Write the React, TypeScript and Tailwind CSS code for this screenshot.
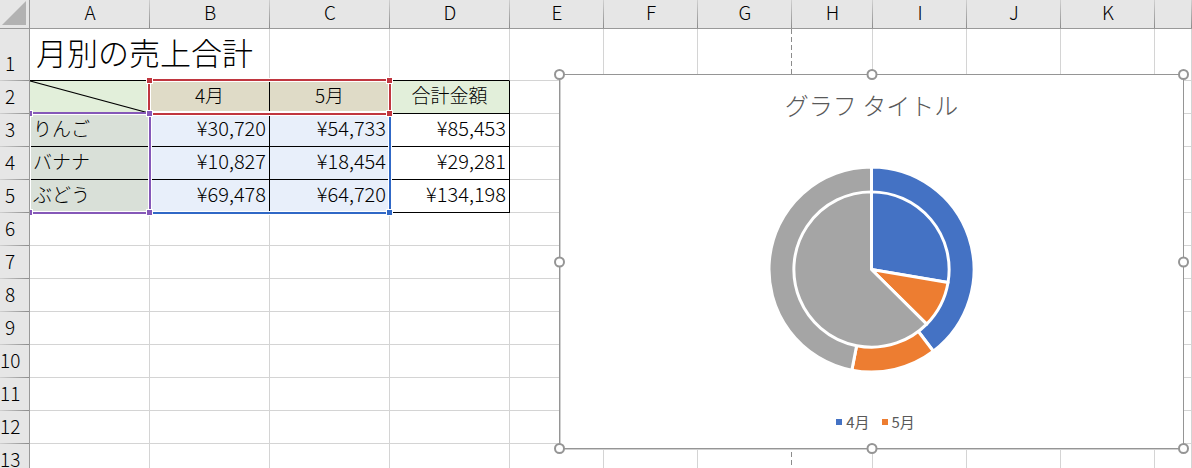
import clsx from "clsx"

type Slice = { color: string; value: number }

const COLUMNS = ["A", "B", "C", "D", "E", "F", "G", "H", "I", "J", "K", "L"]
const EMPTY_ROWS = [6, 7, 8, 9, 10, 11, 12, 13]

const SALES = [
    { row: 3, name: "りんご", april: 30720, may: 54733, color: "#4472c4" },
    { row: 4, name: "バナナ", april: 10827, may: 18454, color: "#ed7d31" },
    { row: 5, name: "ぶどう", april: 69478, may: 64720, color: "#a5a5a5" },
]

const yen = (value: number) => "¥" + value.toLocaleString("en-US")

// Columns E and up hold no data, only grid lines
function EmptyCells({ from = 4 }: { from?: number }) {
    return (
        <>
            {COLUMNS.slice(from).map((col) => (
                <td
                    key={col}
                    className={clsx(
                        "border-b border-[#d4d4d4]",
                        // page break runs along the right side of G
                        col === "G"
                            ? "bg-[repeating-linear-gradient(to_bottom,#8c8c8c_0px_5px,#ffffff_5px_8px)] bg-[length:1px_100%] bg-right bg-no-repeat"
                            : "border-r",
                    )}
                />
            ))}
        </>
    )
}

function RowHeader({ row }: { row: number }) {
    return (
        <th
            scope="row"
            className={clsx(
                "border-r border-[#999999] bg-[#e6e6e6] bg-[linear-gradient(to_right,#d0d0d0,#8c8c8c)] bg-[length:100%_1px] bg-bottom bg-no-repeat p-0 pr-[9px] text-center font-light leading-6",
                row === 1 ? "pb-1.5 align-bottom" : "pb-1 align-middle",
            )}
        >
            {row}
        </th>
    )
}

function Amount({ value, className }: { value: number; className?: string }) {
    return (
        <td className={clsx("border-r border-b border-black p-0 pr-[3px] pb-1 text-right text-xl leading-6", className)}>
            {yen(value)}
        </td>
    )
}

function Sheet() {
    return (
        <table className="w-full table-fixed border-separate border-spacing-0 text-[19px] leading-6 font-light text-black">
            <colgroup>
                <col className="w-[30px]" />
                <col className="w-[120px]" />
                <col className="w-[120px]" />
                <col className="w-[120px]" />
                <col className="w-[120px]" />
                <col className="w-[94px]" />
                <col className="w-[94px]" />
                <col className="w-[94px]" />
                <col className="w-[81px]" />
                <col className="w-[94px]" />
                <col className="w-[94px]" />
                <col className="w-[94px]" />
                <col />
            </colgroup>
            <thead>
                <tr className="h-[29px]">
                    <th className="border-r border-b border-[#999999] bg-[#e6e6e6] p-0">
                        <svg viewBox="0 0 29 28" className="block h-7 w-full" aria-hidden="true">
                            <path d="M26 1V25H2Z" fill="#b2b2b2" />
                        </svg>
                    </th>
                    {COLUMNS.map((col) => (
                        <th
                            key={col}
                            scope="col"
                            className="border-b border-[#999999] bg-[#e6e6e6] bg-[linear-gradient(to_bottom,#d0d0d0,#8c8c8c)] bg-[length:1px_100%] bg-right bg-no-repeat p-0 pb-1 font-light"
                        >
                            {col !== "L" && col}
                        </th>
                    ))}
                </tr>
            </thead>
            <tbody>
                <tr className="h-[52px]">
                    <RowHeader row={1} />
                    <td
                        colSpan={2}
                        className="border-r border-b border-r-[#d4d4d4] border-b-black p-0 pb-1.5 pl-1.5 text-[31px] leading-10 whitespace-nowrap"
                    >
                        月別の売上合計
                    </td>
                    <td className="border-r border-b border-r-[#d4d4d4] border-b-black" />
                    <td className="border-r border-b border-r-[#d4d4d4] border-b-black" />
                    <EmptyCells />
                </tr>
                <tr className="h-[33px]">
                    <RowHeader row={2} />
                    <td className="border-r border-b border-black bg-[#e2efda] p-0">
                        <svg
                            viewBox="0 0 119 32"
                            preserveAspectRatio="none"
                            className="block h-8 w-full"
                            aria-hidden="true"
                        >
                            <path d="M0 0L119 32" stroke="#000000" strokeWidth="1.2" />
                        </svg>
                    </td>
                    <td className="border-r border-b border-black bg-[#dfdbc7] p-0 pb-1 text-center">4月</td>
                    <td className="border-r border-b border-black bg-[#dfdbc7] p-0 pb-1 text-center">5月</td>
                    <td className="border-r border-b border-black bg-[#e2efda] p-0 pb-1 text-center">合計金額</td>
                    <EmptyCells />
                </tr>
                {SALES.map((item) => (
                    <tr key={item.row} className="h-[33px]">
                        <RowHeader row={item.row} />
                        <td className="border-r border-b border-black bg-[#d9e0d8] p-0 pb-1 pl-[3px]">
                            {item.name}
                        </td>
                        <Amount value={item.april} className="bg-[#e8effa]" />
                        <Amount value={item.may} className="bg-[#e8effa]" />
                        <Amount value={item.april + item.may} />
                        <EmptyCells />
                    </tr>
                ))}
                {EMPTY_ROWS.map((row) => (
                    <tr key={row} className="h-[33px]">
                        <RowHeader row={row} />
                        <EmptyCells from={0} />
                    </tr>
                ))}
            </tbody>
        </table>
    )
}

// Coloured frames around the cells that feed the chart
function RangeFrames() {
    return (
        <div className="pointer-events-none" aria-hidden="true">
            {/* B3:C5 values */}
            <div className="absolute top-[112px] left-[149px] h-[102px] w-[242px] border-2 border-[#3068c6] outline outline-white">
                <div className="size-full border border-white" />
                <span className="absolute -right-1 -bottom-1 size-[7px] border border-white bg-[#3068c6]" />
            </div>
            {/* B2:C2 series names */}
            <div className="absolute top-[79px] left-[148px] h-9 w-[243px] border-2 border-[#c0363f] outline outline-white">
                <div className="size-full border border-white" />
                <span className="absolute -top-1 -left-1 size-[7px] border border-white bg-[#c0363f]" />
                <span className="absolute -top-1 -right-1 size-[7px] border border-white bg-[#c0363f]" />
                <span className="absolute -right-1 -bottom-1 size-[7px] border border-white bg-[#c0363f]" />
            </div>
            {/* A3:A5 categories */}
            <div className="absolute top-[112px] left-[30px] h-[102px] w-[121px] border-2 border-l-0 border-[#8558b8]">
                <div className="size-full border border-white" />
                <span className="absolute -top-1 left-0 h-[7px] w-[3px] border border-l-0 border-white bg-[#8558b8]" />
                <span className="absolute -bottom-1 left-0 h-[7px] w-[3px] border border-l-0 border-white bg-[#8558b8]" />
                <span className="absolute -top-1 -right-1 size-[7px] border border-white bg-[#8558b8]" />
                <span className="absolute -right-1 -bottom-1 size-[7px] border border-white bg-[#8558b8]" />
            </div>
        </div>
    )
}

function PieRing({ slices, radius }: { slices: Slice[]; radius: number }) {
    const total = slices.reduce((sum, s) => sum + s.value, 0)
    const point = (share: number) => {
        const angle = share * Math.PI * 2
        return `${104 + radius * Math.sin(angle)} ${104 - radius * Math.cos(angle)}`
    }
    let start = 0

    return (
        <g stroke="#ffffff" strokeWidth="3" strokeLinejoin="round">
            {slices.map((s) => {
                const end = start + s.value / total
                const large = end - start > 0.5 ? 1 : 0
                const d = `M104 104L${point(start)}A${radius} ${radius} 0 ${large} 1 ${point(end)}Z`
                start = end
                return <path key={s.color} d={d} fill={s.color} />
            })}
        </g>
    )
}

const HANDLES = [
    "-top-1.5 -left-1.5",
    "-top-1.5 left-1/2 -translate-x-1/2",
    "-top-1.5 -right-1.5",
    "top-1/2 -left-1.5 -translate-y-1/2",
    "top-1/2 -right-1.5 -translate-y-1/2",
    "-bottom-1.5 -left-1.5",
    "-bottom-1.5 left-1/2 -translate-x-1/2",
    "-right-1.5 -bottom-1.5",
]

function Chart() {
    return (
        <section
            aria-labelledby="chart-title"
            className="absolute top-[74px] left-[559px] flex h-[375px] w-[625px] flex-col items-center justify-between border border-[#959595] bg-white pt-2.5 pb-3.5 text-[#595959] shadow-[0_1px_0_#d0d0d0,inset_1px_0_0_#d0d0d0]"
        >
            <h2 id="chart-title" className="text-2xl leading-10 font-light">
                グラフ タイトル
            </h2>
            <svg viewBox="0 0 208 208" className="mt-1 size-[207px]" role="img" aria-labelledby="chart-title">
                <PieRing slices={SALES.map((s) => ({ color: s.color, value: s.may }))} radius={103} />
                <PieRing slices={SALES.map((s) => ({ color: s.color, value: s.april }))} radius={78} />
            </svg>
            <ul className="flex gap-3 pl-2 text-[15px] leading-6">
                <li className="flex items-center gap-1">
                    <span className="size-1.5 bg-[#4472c4]" />
                    4月
                </li>
                <li className="flex items-center gap-1">
                    <span className="size-1.5 bg-[#ed7d31]" />
                    5月
                </li>
            </ul>
            {HANDLES.map((place) => (
                <span
                    key={place}
                    className={clsx("absolute size-[11px] rounded-full border-2 border-[#959595] bg-white", place)}
                />
            ))}
        </section>
    )
}

export default function App() {
    return (
        <main className="relative h-screen overflow-hidden bg-white font-['Noto_Sans_CJK_JP',sans-serif]">
            <Sheet />
            <RangeFrames />
            <Chart />
        </main>
    )
}
